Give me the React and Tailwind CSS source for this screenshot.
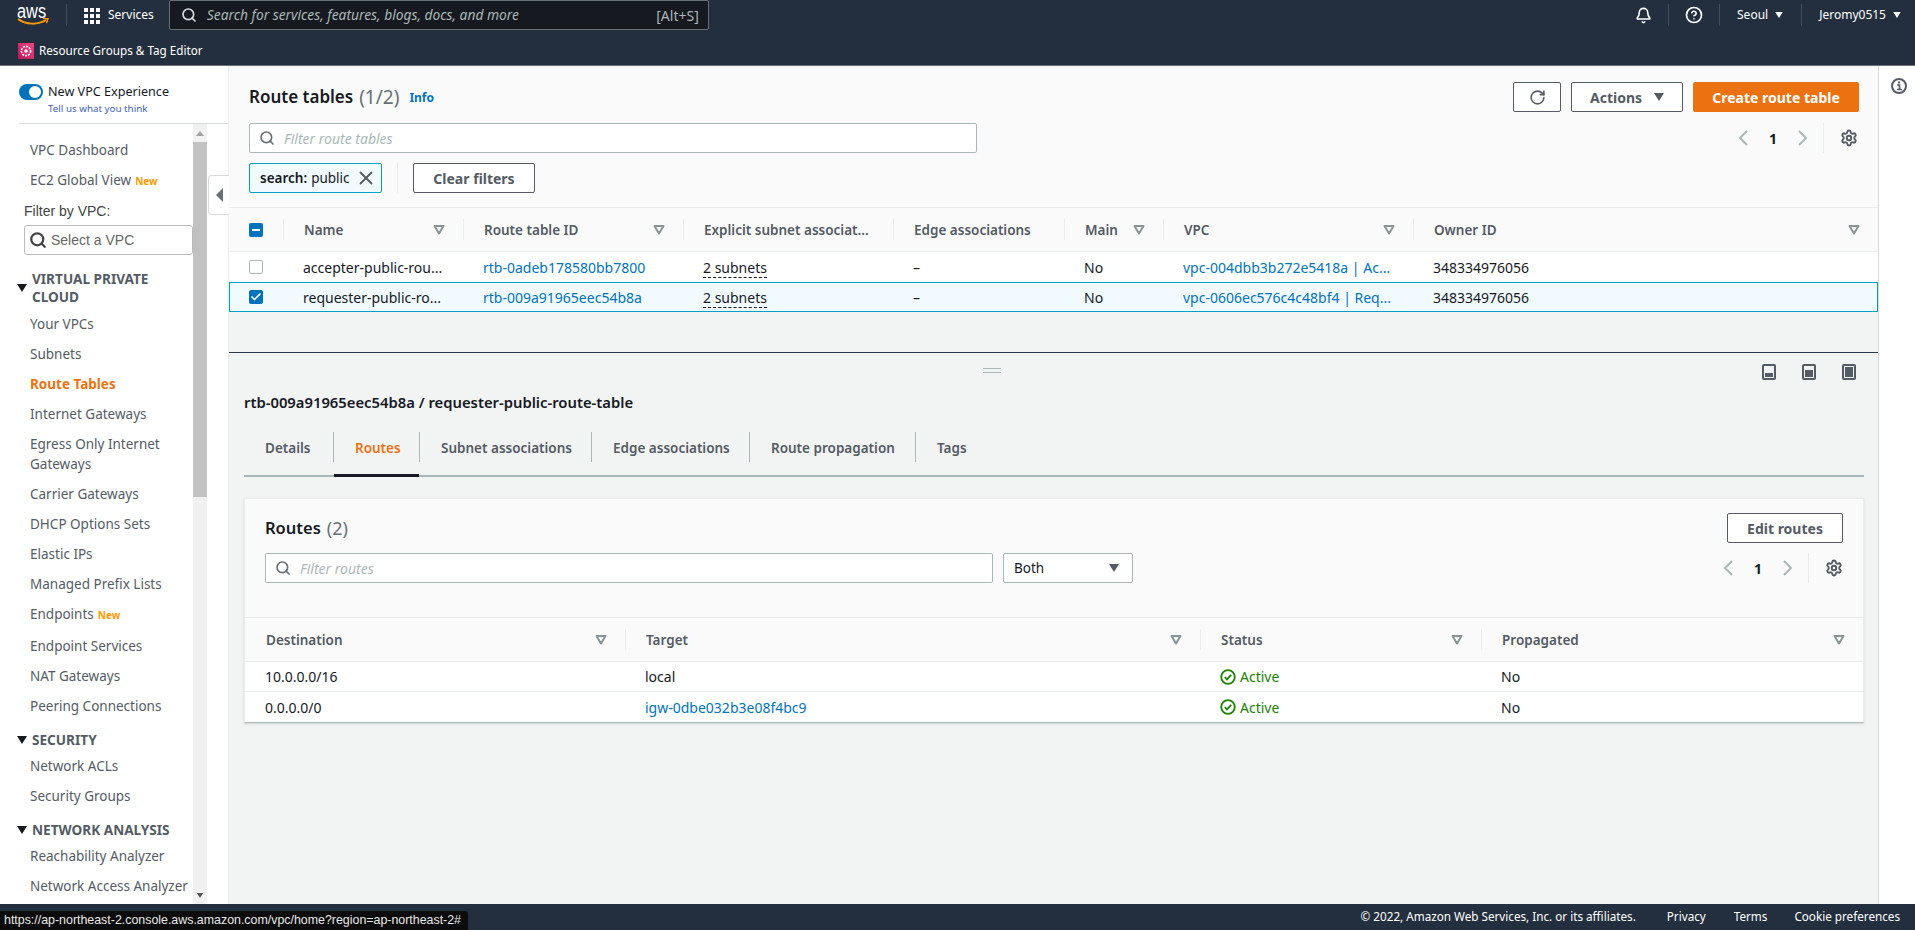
import { Bell, Check, CircleHelp, RotateCw, Search, Settings, X } from 'lucide-react'

const font = { fontFamily: '"Noto Sans", "Open Sans", sans-serif' }

// sidebar rows, heights taken from the reference
const vpcItems = ['Your VPCs', 'Subnets', 'Route Tables', 'Internet Gateways', 'Egress Only Internet Gateways', 'Carrier Gateways', 'DHCP Options Sets', 'Elastic IPs', 'Managed Prefix Lists']

function Caret({ className = '' }) {
  return (
    <svg viewBox="0 0 10 8" className={className}>
      <path d="M0 0h10L5 8z" fill="currentColor" />
    </svg>
  )
}

function SortIcon() {
  return (
    <svg viewBox="0 0 12 10" className="w-3 h-[10px] text-[#879596] shrink-0">
      <path d="M1.5 1h9L6 8.5z" fill="none" stroke="currentColor" strokeWidth="2" strokeLinejoin="round" />
    </svg>
  )
}

function NavItem({ children, isNew, active, className = '' }) {
  return (
    <div className={`h-[30px] flex items-center pl-[30px] text-[13.5px] whitespace-nowrap ${active ? 'font-bold text-[#ec7211]' : 'text-[#545b64]'} ${className}`}>
      {children}
      {isNew && <span className="ml-[4px] mt-[2px] text-[10px] font-bold text-[#ff9900]">New</span>}
    </div>
  )
}

function NavHead({ children, className = '' }) {
  return (
    <div className={`flex items-center pl-[17px] text-[13.6px] leading-[18px] font-bold text-[#545b64] ${className}`}>
      <Caret className="w-[10px] h-[8px] text-[#16191f] shrink-0" />
      <span className="ml-[5px]">{children}</span>
    </div>
  )
}

function Sidebar() {
  return (
    <div className="w-[229px] shrink-0 bg-white relative flex flex-col border-r border-[#eaeded]">
      <div className="h-[58px] shrink-0 ml-[19px] border-b border-[#d5dbdb] pt-[17px]">
        <div className="flex items-center h-[18px]">
          <div className="w-6 h-4 rounded-full bg-[#0073bb] flex justify-end items-center pr-[2px]">
            <div className="w-3 h-3 rounded-full bg-white" />
          </div>
          <span className="ml-[5px] text-[12.6px] text-[#16191f] whitespace-nowrap">New VPC Experience</span>
        </div>
        <div className="ml-[29px] mt-[1px] text-[9.8px] leading-[14px] text-[#3f5fb5]">Tell us what you think</div>
      </div>
      <div className="flex flex-1 min-h-0">
        <div className="w-[193px] shrink-0 overflow-hidden pt-[11px]">
          <NavItem>VPC Dashboard</NavItem>
          <NavItem isNew>EC2 Global View</NavItem>
          <div className="pl-6 mt-[7px] text-[14px] leading-[18px] text-[#444]" style={{ fontFamily: '"Liberation Sans", sans-serif' }}>Filter by VPC:</div>
          <div className="ml-6 mt-[5px] w-[169px] h-[30px] border border-[#bbb] rounded-[3px] flex items-center pl-[4px] text-[14px] text-[#666]" style={{ fontFamily: '"Liberation Sans", sans-serif' }}>
            <Search className="w-[18px] h-[18px] text-[#444]" strokeWidth={3} />
            <span className="ml-[4px]">Select a VPC</span>
          </div>
          <NavHead className="mt-[15px] mb-[3px]">VIRTUAL PRIVATE<br />CLOUD</NavHead>
          {vpcItems.map((item) =>
            item.startsWith('Egress') ? (
              <div key={item} className="py-[5px] pl-[30px] text-[13.5px] leading-5 text-[#545b64]">Egress Only Internet<br />Gateways</div>
            ) : (
              <NavItem key={item} active={item === 'Route Tables'}>{item}</NavItem>
            )
          )}
          <NavItem isNew>Endpoints</NavItem>
          <NavItem className="mt-[2px]">Endpoint Services</NavItem>
          <NavItem>NAT Gateways</NavItem>
          <NavItem>Peering Connections</NavItem>
          <NavHead className="mt-[10px] mb-[2px]">SECURITY</NavHead>
          <NavItem>Network ACLs</NavItem>
          <NavItem>Security Groups</NavItem>
          <NavHead className="mt-[10px] mb-[2px]">NETWORK ANALYSIS</NavHead>
          <NavItem>Reachability Analyzer</NavItem>
          <NavItem>Network Access Analyzer</NavItem>
        </div>
        <div className="w-[14px] bg-[#f1f1f1] flex flex-col items-center">
          <div className="h-[18px] flex items-center text-[#a3a3a3]">
            <svg viewBox="0 0 8 5" className="w-2 h-[5px]"><path d="M0 5h8L4 0z" fill="currentColor" /></svg>
          </div>
          <div className="w-full h-[355px] bg-[#c1c1c1]" />
          <div className="mt-auto h-[18px] flex items-center text-[#505050]">
            <Caret className="w-2 h-[5px]" />
          </div>
        </div>
      </div>
      {/* collapse handle over the sidebar edge */}
      <div className="absolute left-[208px] top-[109px] w-[21px] h-[40px] bg-white border border-r-0 border-[#d5dbdb] rounded-l-[4px] flex items-center justify-center text-[#687078]">
        <svg viewBox="0 0 7 14" className="w-[7px] h-[14px]"><path d="M7 0v14L0 7z" fill="currentColor" /></svg>
      </div>
    </div>
  )
}

function PagerChevron({ d }) {
  return (
    <svg viewBox="0 0 10 16" className="w-[10px] h-4 text-[#aab7b8]">
      <path d={d} fill="none" stroke="currentColor" strokeWidth="2" />
    </svg>
  )
}

function Pager({ className = '' }) {
  return (
    <div className={`flex items-center h-[30px] ${className}`}>
      <PagerChevron d="M9 1L2 8l7 7" />
      <span className="w-[50px] text-center text-[14px] font-bold text-[#16191f]">1</span>
      <PagerChevron d="M1 1l7 7-7 7" />
      <div className="ml-[15px] w-px h-[30px] bg-[#eaeded]" />
      <Settings className="ml-[16px] w-[18px] h-[18px] text-[#545b64]" strokeWidth={2.5} />
    </div>
  )
}

function FilterBox({ placeholder, className = '' }) {
  return (
    <div className={`h-[30px] bg-white border border-[#aab7b8] rounded-[2px] flex items-center pl-[9px] ${className}`}>
      <Search className="w-[16px] h-[16px] text-[#687078]" strokeWidth={2.5} />
      <span className="ml-[9px] text-[14px] italic text-[#aab7b8]">{placeholder}</span>
    </div>
  )
}

function Btn({ children, className = '' }) {
  return (
    <div className={`h-[30px] bg-white border border-[#545b64] rounded-[2px] flex items-center justify-center text-[14px] font-bold text-[#545b64] ${className}`}>
      {children}
    </div>
  )
}

function Th({ children, sort = true, first }) {
  return (
    <div className="flex items-center h-full min-w-0">
      {!first && <div className="w-px h-[21px] bg-[#eaeded] shrink-0" />}
      <span className={`flex-1 pt-[2px] whitespace-nowrap text-[13.5px] font-semibold text-[#545b64] ${first ? 'pl-[21px]' : 'pl-5'}`}>{children}</span>
      {sort && <span className="pr-[18px]"><SortIcon /></span>}
    </div>
  )
}

const Link = ({ children }) => <span className="text-[#0073bb]">{children}</span>

const topCols = 'grid grid-cols-[54px_180px_220px_210px_171px_99px_250px_1fr]'
const routeCols = 'grid grid-cols-[380px_575px_281px_1fr]'

function RouteRow({ row, selected }) {
  return (
    <div className={`${topCols} h-[30px] items-center text-[14px] text-[#16191f] whitespace-nowrap ${selected ? 'bg-[#f1faff] outline outline-1 -outline-offset-1 outline-[#00a1c9]' : 'bg-white'}`}>
      <div className="pl-5">
        {selected ? (
          <div className="w-[14px] h-[14px] rounded-[2px] bg-[#0073bb] flex items-center justify-center">
            <Check className="w-3 h-3 text-white" strokeWidth={3.5} />
          </div>
        ) : (
          <div className="w-[14px] h-[14px] rounded-[2px] border border-[#aab7b8] bg-white" />
        )}
      </div>
      <div className="pl-5">{row.name}</div>
      <div className="pl-5"><Link>{row.id}</Link></div>
      <div className="pl-5"><span className="border-b border-dashed border-[#16191f]">2 subnets</span></div>
      <div className="pl-5">–</div>
      <div className="pl-5">No</div>
      <div className="pl-5"><Link>{row.vpc}</Link></div>
      <div className="pl-5">348334976056</div>
    </div>
  )
}

function RouteTables() {
  return (
    <div className="h-[287px] shrink-0 flex flex-col bg-[#f2f3f3] border-b border-[#2a3a4a]">
      <div className="h-[141px] shrink-0 bg-[#fafafa] mt-[1px] border-b border-[#eaeded] pl-[20px] pr-[19px] pt-[15px]">
        <div className="flex items-center h-[30px]">
          <span className="text-[17px] font-semibold text-[#16191f]">Route tables</span>
          <span className="ml-[6px] text-[19px] text-[#687078]">(1/2)</span>
          <span className="ml-[10px] mt-[2px] text-[12px] font-bold text-[#0073bb]">Info</span>
          <Btn className="ml-auto w-[48px]"><RotateCw className="w-[17px] h-[17px]" strokeWidth={2.25} /></Btn>
          <Btn className="ml-[10px] w-[112px] gap-3">Actions<Caret className="w-[10px] h-2" /></Btn>
          <div className="ml-[10px] w-[166px] h-[30px] bg-[#ec7211] rounded-[2px] flex items-center justify-center text-[14px] font-bold text-white">Create route table</div>
        </div>
        <div className="flex items-center mt-[11px]">
          <FilterBox placeholder="Filter route tables" className="w-[728px]" />
          <Pager className="ml-auto mr-px" />
        </div>
        <div className="flex items-center mt-[10px]">
          <div className="w-[133px] h-[30px] bg-[#f1faff] border border-[#00a1c9] rounded-[2px] flex items-center pl-[10px] text-[13.5px] text-[#16191f] whitespace-nowrap">
            <span className="font-semibold">search:</span>
            <span className="ml-[4px]">public</span>
            <X className="ml-auto mr-[4px] w-[22px] h-[22px] text-[#545b64]" strokeWidth={2} />
          </div>
          <div className="ml-[15px] w-px h-[30px] bg-[#eaeded]" />
          <Btn className="ml-[15px] w-[122px]">Clear filters</Btn>
        </div>
      </div>
      <div className={`${topCols} h-[44px] shrink-0 bg-[#fafafa] items-center border-b border-[#eaeded]`}>
        <div className="pl-5">
          <div className="w-[14px] h-[14px] rounded-[2px] bg-[#0073bb] flex items-center justify-center">
            <div className="w-2 h-[2px] bg-white" />
          </div>
        </div>
        <Th>Name</Th>
        <Th>Route table ID</Th>
        <Th sort={false}>Explicit subnet associat...</Th>
        <Th sort={false}>Edge associations</Th>
        <Th>Main</Th>
        <Th>VPC</Th>
        <Th>Owner ID</Th>
      </div>
      <RouteRow row={{ name: 'accepter-public-rou...', id: 'rtb-0adeb178580bb7800', vpc: 'vpc-004dbb3b272e5418a | Ac...' }} />
      <RouteRow selected row={{ name: 'requester-public-ro...', id: 'rtb-009a91965eec54b8a', vpc: 'vpc-0606ec576c4c48bf4 | Req...' }} />
    </div>
  )
}

function PanelIcon({ fill }) {
  return (
    <svg viewBox="0 0 14 16" className="w-[14px] h-4 text-[#545b64]">
      <rect x="1" y="1" width="12" height="14" rx="1" fill="none" stroke="currentColor" strokeWidth="2" />
      <rect x="3" y={16 - 3 - fill} width="8" height={fill} fill="currentColor" />
    </svg>
  )
}

const tabs = [
  ['Details', 'w-[89px]'],
  ['Routes', 'w-[86px]'],
  ['Subnet associations', 'w-[172px]'],
  ['Edge associations', 'w-[158px]'],
  ['Route propagation', 'w-[166px]'],
  ['Tags', 'w-[80px]'],
]

function Details() {
  return (
    <div className="flex-1 min-h-0 bg-[#f2f3f3] pl-[15px] pr-[14px] overflow-hidden">
      <div className="h-[40px] pb-[2px] relative flex items-center justify-end gap-[26px] pr-[8px]">
        <div className="absolute left-[739px] top-[15px] w-[18px] h-[5px] border-y border-[#aab7b8]" />
        <PanelIcon fill={4} />
        <PanelIcon fill={7} />
        <PanelIcon fill={10} />
      </div>
      <div className="h-[18px] leading-[18px] text-[14.8px] font-semibold text-[#16191f]">rtb-009a91965eec54b8a / requester-public-route-table</div>
      <div className="mt-[21px] h-[45px] flex border-b-2 border-[#aab7b8]">
        {tabs.map(([t, w], i) => (
          <div key={t} className={`${w} h-[44px] relative`}>
            <div className={`h-[30px] flex items-center pl-[21px] pt-[2px] text-[13.5px] font-semibold whitespace-nowrap ${i > 0 ? 'border-l border-[#aab7b8]' : ''} ${t === 'Routes' ? 'text-[#ec7211]' : 'text-[#545b64]'}`}>{t}</div>
            {t === 'Routes' && <div className="absolute left-[1px] right-0 bottom-[-1px] h-[3px] bg-[#16191f]" />}
          </div>
        ))}
      </div>
      <div className="mt-[21px] bg-white border border-[#eaeded] border-b-[#aab7b8] shadow-sm">
        <div className="h-[119px] bg-[#fafafa] border-b border-[#eaeded] px-5 pt-[14px]">
          <div className="flex items-center h-[30px]">
            <span className="text-[16.5px] font-semibold text-[#16191f]">Routes</span>
            <span className="ml-[6px] text-[18px] text-[#687078]">(2)</span>
            <Btn className="ml-auto w-[116px]">Edit routes</Btn>
          </div>
          <div className="flex items-center mt-[10px]">
            <FilterBox placeholder="Filter routes" className="w-[728px]" />
            <div className="ml-[10px] w-[130px] h-[30px] bg-white border border-[#aab7b8] rounded-[2px] flex items-center justify-between pl-[10px] pr-[13px] text-[13.5px] text-[#16191f]">
              Both<Caret className="w-[10px] h-2 text-[#545b64]" />
            </div>
            <Pager className="ml-auto" />
          </div>
        </div>
        <div className={`${routeCols} h-[44px] bg-[#fafafa] items-center border-b border-[#eaeded]`}>
          <Th first>Destination</Th>
          <Th>Target</Th>
          <Th>Status</Th>
          <Th>Propagated</Th>
        </div>
        {[['10.0.0.0/16', 'local'], ['0.0.0.0/0', 'igw-0dbe032b3e08f4bc9']].map(([dest, target], i) => (
          <div key={dest} className={`${routeCols} h-[30px] items-center text-[14px] text-[#16191f] ${i === 0 ? 'border-b border-[#eaeded]' : ''}`}>
            <div className="pl-5">{dest}</div>
            <div className="pl-5">{i === 0 ? target : <Link>{target}</Link>}</div>
            <div className="pl-5 flex items-center text-[#1d8102]">
              <svg viewBox="0 0 16 16" className="w-4 h-4 mr-[4px]">
                <circle cx="8" cy="8" r="6.8" fill="none" stroke="currentColor" strokeWidth="1.8" />
                <path d="M4.8 8.2l2.2 2.2 4.2-4.6" fill="none" stroke="currentColor" strokeWidth="1.8" />
              </svg>
              Active
            </div>
            <div className="pl-5">No</div>
          </div>
        ))}
      </div>
    </div>
  )
}

export default function App() {
  return (
    <div className="relative w-[1915px] h-[930px] flex flex-col overflow-hidden bg-white" style={font}>
      {/* top nav */}
      <div className="h-[66px] shrink-0 bg-[#232f3e] border-b border-[#687078] text-white">
        <div className="h-[38px] flex items-start">
          <div className="w-[66px] h-[30px] pl-[17px] relative">
            <div className="text-[19.5px] leading-[23px] origin-left scale-x-[0.84]" style={{ fontFamily: '"Liberation Sans", sans-serif' }}>aws</div>
            <svg viewBox="0 0 32 8" className="w-8 h-2 absolute left-[17px] top-[18px]">
              <path d="M1 1c8 6 20 6 28 1" fill="none" stroke="#ff9900" strokeWidth="2" />
              <path d="M26 0.5l5 0-1.5 4.5" fill="none" stroke="#ff9900" strokeWidth="1.5" />
            </svg>
          </div>
          <div className="w-px h-[22px] mt-1 bg-[#414d5c]" />
          <div className="ml-[17px] mt-[8px] grid grid-cols-3 gap-[2px]">
            {Array.from({ length: 9 }, (_, i) => <div key={i} className="w-1 h-1 bg-white" />)}
          </div>
          <span className="ml-[8px] mt-[6px] text-[12px] leading-[18px]">Services</span>
          <div className="ml-[15px] w-[540px] h-[30px] bg-[#16191f] border border-[#687078] rounded-[2px] flex items-center pl-[11px] pr-[9px] text-[13.8px] text-[#aab7b8]">
            <Search className="w-[16px] h-[16px] text-[#d5dbdb]" strokeWidth={2.5} />
            <span className="ml-[10px] italic">Search for services, features, blogs, docs, and more</span>
            <span className="ml-auto text-[14px]">[Alt+S]</span>
          </div>
          <div className="ml-auto flex items-center h-[30px] text-[12px]">
            <Bell className="w-[17px] h-[17px]" strokeWidth={2.25} />
            <div className="ml-[16px] w-px h-[22px] bg-[#414d5c]" />
            <CircleHelp className="ml-[16px] w-[18px] h-[18px]" strokeWidth={2.25} />
            <div className="ml-[16px] w-px h-[22px] bg-[#414d5c]" />
            <span className="ml-[17px]">Seoul</span>
            <Caret className="ml-[7px] w-2 h-[6px]" />
            <div className="ml-[18px] w-px h-[22px] bg-[#414d5c]" />
            <span className="ml-[17px]">Jeromy0515</span>
            <Caret className="ml-[7px] mr-[14px] w-2 h-[6px]" />
          </div>
        </div>
        <div className="flex items-center h-[24px] pl-[18px] pt-[2px]">
          <div className="w-4 h-4 bg-gradient-to-tr from-[#bc1356] to-[#f34482] flex items-center justify-center">
            <svg viewBox="0 0 12 12" className="w-3 h-3">
              <circle cx="6" cy="6" r="4.6" fill="none" stroke="white" strokeWidth="1.6" strokeDasharray="2 1" />
              <circle cx="6" cy="6" r="1.8" fill="white" />
            </svg>
          </div>
          <span className="ml-[5px] text-[11.7px]">Resource Groups &amp; Tag Editor</span>
        </div>
      </div>

      <div className="flex flex-1 min-h-0">
        <Sidebar />
        <div className="flex-1 min-w-0 flex flex-col">
          <RouteTables />
          <Details />
        </div>
        <div className="w-[37px] shrink-0 bg-white border-l border-[#d5dbdb] flex justify-center pt-[12px] pl-[4px]">
          <svg viewBox="0 0 16 16" className="w-4 h-4 text-[#545b64]">
            <circle cx="8" cy="8" r="7" fill="none" stroke="currentColor" strokeWidth="2" />
            <rect x="7" y="3.5" width="2" height="2" fill="currentColor" />
            <path d="M6 7h2.5v4.5M6 11.5h5" fill="none" stroke="currentColor" strokeWidth="1.6" />
          </svg>
        </div>
      </div>

      {/* footer */}
      <div className="h-[26px] shrink-0 bg-[#232f3e] flex items-center justify-end text-[11.7px] text-white pr-[15px] whitespace-nowrap">
        <span>© 2022, Amazon Web Services, Inc. or its affiliates.</span>
        <span className="ml-[31px]">Privacy</span>
        <span className="ml-[28px]">Terms</span>
        <span className="ml-[27px]">Cookie preferences</span>
      </div>

      {/* browser status bubble */}
      <div className="absolute left-0 bottom-0 h-[19px] w-[468px] bg-[#0c0c0c] rounded-tr-[3px] pl-[4px] text-[12.4px] leading-[19px] text-[#e8e8e8] whitespace-nowrap" style={{ fontFamily: '"Liberation Sans", sans-serif' }}>
        https://ap-northeast-2.console.aws.amazon.com/vpc/home?region=ap-northeast-2#
      </div>
    </div>
  )
}
